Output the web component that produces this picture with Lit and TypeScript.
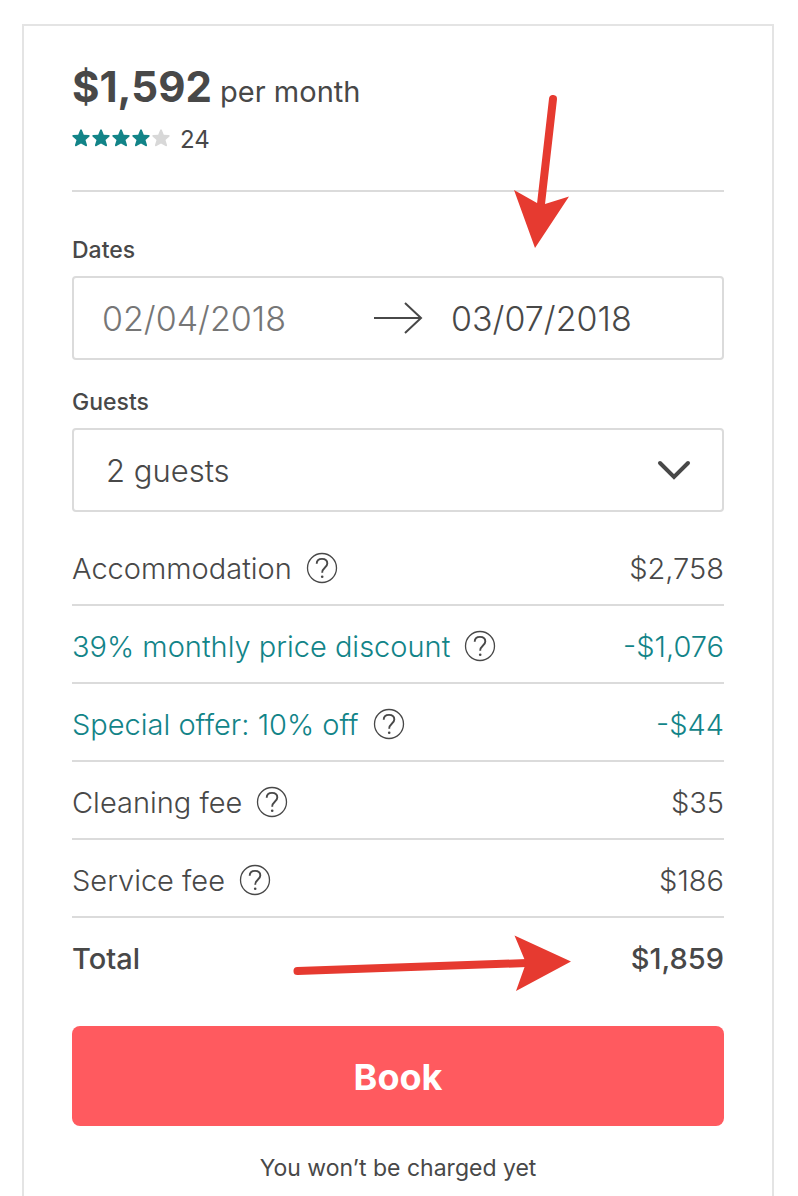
import { LitElement, html, css, svg } from "lit";
import { customElement, property, state } from "lit/decorators.js";
import { classMap } from "lit/directives/class-map.js";

interface PriceItem {
  label: string;
  amount: string;
  discount?: boolean;
}

@customElement("star-rating")
class StarRating extends LitElement {
  @property({ type: Number }) value = 0;
  @property({ type: Number }) max = 5;

  static styles = css`
    :host {
      display: inline-flex;
      gap: 2px;
      padding-bottom: 4px;
    }
    .star {
      display: block;
      width: 18px;
      height: 18px;
      fill: #d8d8d8;
    }
    .filled {
      fill: #128488;
    }
  `;

  render() {
    return Array.from(
      { length: this.max },
      (_, i) => html`<svg
        class=${classMap({ star: true, filled: i < this.value })}
        viewBox="0 0 18 18"
        aria-hidden="true"
      >
        <path
          d="M8.1 0.9 Q9 -0.5 9.9 0.9 L11.8 5.8 L16.7 6 Q18.4 6.4 17.2 7.7 L13.5 10.9 L15 16 Q15.2 17.9 13.5 17.1 L9 14.4 L4.5 17.1 Q2.8 17.9 3 16 L4.5 10.9 L0.8 7.7 Q-0.4 6.4 1.3 6 L6.2 5.8 Z"
        />
      </svg>`
    );
  }
}

@customElement("help-button")
class HelpButton extends LitElement {
  @property() topic = "";

  static styles = css`
    :host {
      display: inline-flex;
    }
    .help {
      display: block;
      padding: 0;
      border: 0;
      background: none;
      color: #484848;
      cursor: pointer;
    }
    .icon {
      display: block;
      width: 32px;
      height: 32px;
      fill: none;
      stroke: currentColor;
    }
  `;

  render() {
    return html`<button class="help" type="button" aria-label="About ${this.topic}">
      <svg class="icon" viewBox="0 0 32 32" aria-hidden="true">
        <circle cx="16" cy="16" r="14.5" stroke-width="1.3" />
        <path
          d="M10.7 11.8 C10.7 8.6 12.9 6.9 16 6.9 C19.2 6.9 21.3 8.8 21.3 11.5 C21.3 15.6 16.2 15.6 16.2 20.8"
          stroke-width="1.9"
        />
        <circle cx="16.2" cy="24.8" r="1.3" fill="currentColor" stroke="none" />
      </svg>
    </button>`;
  }
}

@customElement("app-root")
class AppRoot extends LitElement {
  @state() private items: PriceItem[] = [
    { label: "Accommodation", amount: "$2,758" },
    { label: "39% monthly price discount", amount: "-$1,076", discount: true },
    { label: "Special offer: 10% off", amount: "-$44", discount: true },
    { label: "Cleaning fee", amount: "$35" },
    { label: "Service fee", amount: "$186" },
  ];

  static styles = css`
    :host {
      display: flex;
      position: relative;
      box-sizing: border-box;
      min-height: 100vh;
      padding: 24px 24px 0 22px;
      background: #fff;
      color: #484848;
      font-family: Inter, "Liberation Sans", sans-serif;
      font-size: 29px;
      font-weight: 300;
    }
    .card {
      flex: 1;
      min-width: 0;
      padding: 35px 48px 0;
      border: 2px solid #e4e4e4;
      border-bottom: 0;
    }
    .summary {
      padding-bottom: 28px;
      border-bottom: 2px solid #dbdbdb;
    }
    .price {
      margin: 0;
      font-size: 29px;
      font-weight: 400;
      line-height: 52px;
    }
    .amount {
      font-size: 42px;
      font-weight: 700;
    }
    .reviews {
      display: flex;
      align-items: center;
      gap: 10px;
      font-size: 24px;
      font-weight: 400;
      line-height: 44px;
    }
    .label {
      display: block;
      padding: 0;
      font-size: 23px;
      font-weight: 500;
      line-height: 28px;
    }
    .field {
      min-width: 0;
      margin: 0;
      padding: 0;
      border: 0;
    }
    .dates {
      margin-top: 44px;
    }
    .guests {
      margin-top: 28px;
    }
    .box {
      display: flex;
      align-items: center;
      position: relative;
      box-sizing: border-box;
      height: 84px;
      margin-top: 12px;
      border: 2px solid #dbdbdb;
      border-radius: 4px;
    }
    .control {
      flex: 1;
      box-sizing: border-box;
      min-width: 0;
      width: 100%;
      height: 80px;
      margin: 0;
      border: 0;
      outline: 0;
      background: none;
      color: inherit;
      font: inherit;
    }
    .date {
      padding: 0 0 0 28px;
      font-size: 34px;
    }
    .start {
      color: #767676;
    }
    .select {
      padding: 0 72px 0 32px;
      font-size: 31px;
      appearance: none;
    }
    .arrow {
      flex: none;
      width: 50px;
      height: 34px;
      fill: none;
      stroke: #484848;
      stroke-width: 2;
    }
    .chevron {
      position: absolute;
      right: 30px;
      width: 36px;
      height: 22px;
      fill: none;
      stroke: #484848;
      stroke-width: 4;
      stroke-linecap: round;
      pointer-events: none;
    }
    .breakdown {
      width: 100%;
      margin-top: 16px;
      border-collapse: separate;
      border-spacing: 0;
    }
    .cell {
      box-sizing: border-box;
      height: 78px;
      padding: 4px 0 0;
      border-bottom: 2px solid #dbdbdb;
      font-weight: inherit;
      text-align: left;
    }
    .discount {
      color: #128488;
    }
    .name {
      display: flex;
      align-items: center;
      gap: 14px;
    }
    .value {
      text-align: right;
    }
    .total {
      font-weight: 500;
    }
    .total .cell {
      border-bottom-color: transparent;
    }
    .book {
      display: block;
      width: 100%;
      height: 100px;
      margin-top: 30px;
      padding: 2px 0 0;
      border: 0;
      border-radius: 8px;
      background: #ff5a5f;
      color: #fff;
      font: inherit;
      font-size: 36px;
      font-weight: 700;
      cursor: pointer;
    }
    .note {
      margin: 28px 0 0;
      font-size: 23px;
      font-weight: 400;
      line-height: 28px;
      text-align: center;
    }
    .marks {
      position: absolute;
      top: 0;
      left: 0;
      width: 798px;
      height: 1196px;
      max-width: 100%;
      pointer-events: none;
    }
    .shaft {
      fill: none;
      stroke: #e63a30;
      stroke-width: 8;
      stroke-linecap: round;
    }
    .head {
      fill: #e63a30;
    }
  `;

  private renderRow(item: PriceItem) {
    return html`<tr class=${classMap({ discount: !!item.discount })}>
      <th class="cell" scope="row">
        <span class="name">${item.label}<help-button .topic=${item.label}></help-button></span>
      </th>
      <td class="cell value">${item.amount}</td>
    </tr>`;
  }

  private renderMarks() {
    return svg`
      <path class="shaft" d="M553 99 L541 204" />
      <path class="head" d="M514 190 L537 203 L545 204 L569 196.5 L535 248 Z" />
      <path class="shaft" d="M297.5 971 L527 963" />
      <path class="head" d="M514.5 935.5 L571 961.5 L516 991 L526 963 Z" />
    `;
  }

  render() {
    return html`
      <main class="card">
        <header class="summary">
          <p class="price"><span class="amount">$1,592</span> per month</p>
          <div class="reviews">
            <star-rating .value=${4} role="img" aria-label="4 out of 5 stars"></star-rating>
            <span>24</span>
          </div>
        </header>
        <form @submit=${(e: Event) => e.preventDefault()}>
          <fieldset class="field dates">
            <legend class="label">Dates</legend>
            <div class="box">
              <input class="control date start" type="text" aria-label="Check in" value="02/04/2018" />
              <svg class="arrow" viewBox="0 0 50 34" aria-hidden="true">
                <path d="M1 17 H48 M32 2 L48 17 L32 32" />
              </svg>
              <input class="control date" type="text" aria-label="Check out" value="03/07/2018" />
            </div>
          </fieldset>
          <div class="field guests">
            <label class="label" for="guests">Guests</label>
            <div class="box">
              <select class="control select" id="guests">
                <option>1 guest</option>
                <option selected>2 guests</option>
                <option>3 guests</option>
                <option>4 guests</option>
              </select>
              <svg class="chevron" viewBox="0 0 36 22" aria-hidden="true">
                <path d="M4 4 L18 18 L32 4" />
              </svg>
            </div>
          </div>
          <table class="breakdown">
            <tbody>
              ${this.items.map((item) => this.renderRow(item))}
              <tr class="total">
                <th class="cell" scope="row">Total</th>
                <td class="cell value">$1,859</td>
              </tr>
            </tbody>
          </table>
          <button class="book" type="submit">Book</button>
          <p class="note">You won’t be charged yet</p>
        </form>
      </main>
      <svg class="marks" viewBox="0 0 798 1196" aria-hidden="true">${this.renderMarks()}</svg>
    `;
  }
}
